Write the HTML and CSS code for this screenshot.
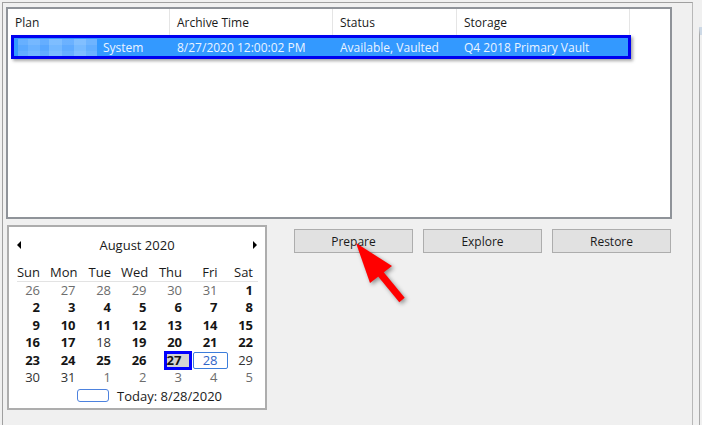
FILE: index.html
```html
<!DOCTYPE html>
<html lang="en">
<head>
    <meta charset="UTF-8">
    <meta name="viewport" content="width=device-width, initial-scale=1.0">
    <title>Archive Restore</title>
    <link rel="stylesheet" href="styles.css">
</head>
<body>
    <div class="window">
        <div class="frame">
            <!-- archive list -->
            <div class="listview">
                <div class="lv-header">
                    <div class="col col-plan">Plan</div>
                    <div class="col col-time">Archive Time</div>
                    <div class="col col-status">Status</div>
                    <div class="col col-storage">Storage</div>
                </div>
                <div class="lv-row selected">
                    <div class="cell cell-plan"><span class="blurred"></span>System</div>
                    <div class="cell cell-time">8/27/2020 12:00:02 PM</div>
                    <div class="cell cell-status">Available, Vaulted</div>
                    <div class="cell cell-storage">Q4 2018 Primary Vault</div>
                </div>
            </div>

            <div class="lower">
                <!-- month calendar -->
                <div class="calendar">
                    <div class="cal-title">
                        <span class="nav nav-prev"></span>
                        <span class="month">August 2020</span>
                        <span class="nav nav-next"></span>
                    </div>
                    <div class="cal-days">
                        <span>Sun</span><span>Mon</span><span>Tue</span><span>Wed</span><span>Thu</span><span>Fri</span><span>Sat</span>
                    </div>
                    <div class="cal-divider"></div>
                    <div class="cal-dates">
                        <span class="other">26</span><span class="other">27</span><span class="other">28</span><span class="other">29</span><span class="other">30</span><span class="other">31</span><span class="bold">1</span>
                        <span class="bold">2</span><span class="bold">3</span><span class="bold">4</span><span class="bold">5</span><span class="bold">6</span><span class="bold">7</span><span class="bold">8</span>
                        <span class="bold">9</span><span class="bold">10</span><span class="bold">11</span><span class="bold">12</span><span class="bold">13</span><span class="bold">14</span><span class="bold">15</span>
                        <span class="bold">16</span><span class="bold">17</span><span>18</span><span class="bold">19</span><span class="bold">20</span><span class="bold">21</span><span class="bold">22</span>
                        <span class="bold">23</span><span class="bold">24</span><span class="bold">25</span><span class="bold">26</span><span class="bold selected">27</span><span class="today">28</span><span>29</span>
                        <span>30</span><span>31</span><span class="other">1</span><span class="other">2</span><span class="other">3</span><span class="other">4</span><span class="other">5</span>
                    </div>
                    <div class="cal-footer">
                        <span class="today-box"></span>
                        <span>Today: 8/28/2020</span>
                    </div>
                </div>

                <div class="actions">
                    <button class="btn">Prepare</button>
                    <button class="btn">Explore</button>
                    <button class="btn">Restore</button>
                </div>
            </div>
        </div>
        <div class="side">
            <div class="side-inner"></div>
        </div>
    </div>

    <!-- red callout arrow over the Prepare button -->
    <svg class="pointer" width="80" height="80" viewBox="0 0 80 80">
        <polygon points="16,8 30,48 52,31" fill="#ff0000"/>
        <line x1="39" y1="37" x2="62" y2="65" stroke="#ff0000" stroke-width="7"/>
    </svg>
</body>
</html>
```

FILE: styles.css
```css
* {
    margin: 0;
    padding: 0;
    box-sizing: border-box;
}
body {
    width: 702px;
    height: 425px;
    overflow: hidden;
    background: #f0f0f0;
    font-family: "Open Sans", "Noto Sans", sans-serif;
    font-size: 12px;
    color: #1a1a1a;
}
.window {
    display: flex;
    height: 425px;
}
.frame {
    width: 691px;
    margin: 2px 0 0 2px;
    padding: 4px 0 0 3px;
    border-top: 1px solid #a0a0a0;
    border-left: 1px solid #a0a0a0;
    border-right: 1px solid #b8b8b8;
}

/* list view */
.listview {
    width: 666px;
    height: 212px;
    border: 2px solid #8f9399;
    background: #fff;
}
.lv-header {
    display: flex;
    height: 26px;
}
.lv-header .col {
    padding: 2px 0 0 7px;
    line-height: 24px;
    border-right: 1px solid #e5e5e5;
}
.col-plan { width: 162px; }
.col-time { width: 163px; }
.col-status { width: 124px; }
.col-storage { width: 173px; }

.lv-row {
    display: flex;
    align-items: center;
    width: 620px;
    height: 24px;
    margin-left: 3px;
    border: 3px solid #0000f0;
    background: #3399ff;
    color: #eaf4ff;
    box-shadow: 2px 2px 3px rgba(0, 0, 0, 0.35);
}
.lv-row .cell {
    padding-left: 7px;
    white-space: nowrap;
}
.lv-row .cell-plan {
    display: flex;
    align-items: center;
    width: 156px;
    padding-left: 4px;
}
.blurred {
    width: 79px;
    height: 17px;
    margin-right: 6px;
    background:
        linear-gradient(180deg, rgba(255,255,255,0.08) 0 6px, rgba(0,0,0,0) 6px 12px, rgba(255,255,255,0.06) 12px),
        linear-gradient(90deg, #5aa9ff 0 10px, #6ab2ff 10px 22px, #58a7ff 22px 31px, #73b8ff 31px 44px, #5fabff 44px 56px, #77baff 56px 68px, #62aeff 68px);
}
.cell-time { width: 163px; }
.cell-status { width: 124px; }

/* calendar */
.lower {
    display: flex;
    margin: 6px 0 0 1px;
}
.calendar {
    width: 260px;
    height: 185px;
    border: 2px solid #adadad;
    background: #fff;
    font-size: 13px;
}
.cal-title {
    display: flex;
    align-items: center;
    justify-content: space-between;
    height: 18px;
    margin-top: 9px;
    padding: 0 8px;
}
.nav {
    width: 0;
    height: 0;
    border-top: 4px solid transparent;
    border-bottom: 4px solid transparent;
}
.nav-prev { border-right: 4px solid #000; }
.nav-next { border-left: 4px solid #000; }

.cal-days,
.cal-dates {
    display: grid;
    grid-template-columns: repeat(7, 35.5px);
    margin-left: 5.5px;
}
.cal-days {
    height: 18px;
    line-height: 18px;
    margin-top: 9px;
}
.cal-days span,
.cal-dates span {
    text-align: right;
    padding-right: 10px;
}
.cal-divider {
    width: 241px;
    height: 1px;
    margin-left: 8px;
    background: #e3e3e3;
}
.cal-dates {
    grid-auto-rows: 17.4px;
    line-height: 17.4px;
    color: #333;
}
.cal-dates .bold {
    font-weight: 700;
    color: #151515;
}
.cal-dates .other {
    color: #6d6d6d;
}
.cal-dates .selected {
    height: 19px;
    margin: -1px 0 0 7px;
    line-height: 13px;
    padding-right: 8px;
    border: 3px solid #0000ff;
    background: #d3d3d3;
}
.cal-dates .today {
    height: 17px;
    margin-left: 1px;
    line-height: 15px;
    padding-right: 9px;
    border: 1px solid #3c7ddb;
    border-radius: 2px;
    color: #2f64c8;
}
.cal-footer {
    display: flex;
    align-items: center;
    gap: 8px;
    height: 19px;
    padding-left: 68px;
}
.today-box {
    width: 32px;
    height: 13px;
    border: 1.5px solid #4d82de;
    border-radius: 3px;
}

/* buttons */
.actions {
    display: flex;
    gap: 10px;
    margin: 4px 0 0 27px;
}
.btn {
    width: 119px;
    height: 24px;
    border: 1px solid #adadad;
    background: #e1e1e1;
    font-family: "Open Sans", "Noto Sans", sans-serif;
    font-size: 12px;
    color: #1a1a1a;
}

/* right edge strip */
.side {
    flex: 1;
}
.side-inner {
    height: 398px;
    margin: 27px 0 0 6px;
    border-left: 1px solid #a8a8a8;
    border-top: 8px solid #cdd9e6;
}

.pointer {
    position: absolute;
    left: 340px;
    top: 235px;
    filter: drop-shadow(2px 2px 2px rgba(0, 0, 0, 0.4));
}
```
